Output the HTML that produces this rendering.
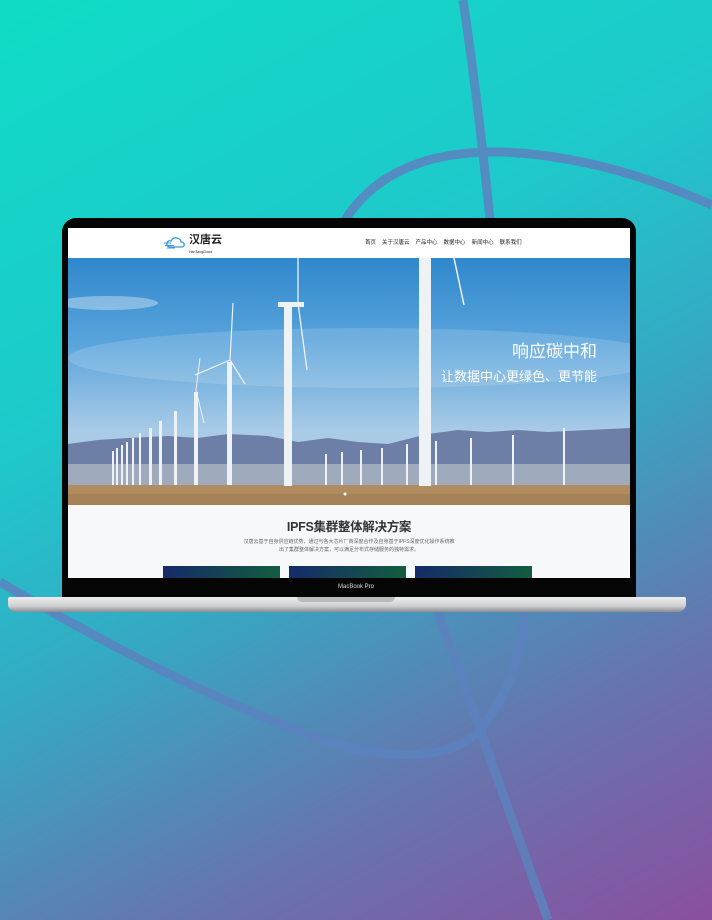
<!DOCTYPE html>
<html><head><meta charset="utf-8"><style>
body{margin:0;width:712px;height:920px;overflow:hidden;position:relative;font-family:"Liberation Sans","Noto Sans CJK SC",sans-serif;
background:linear-gradient(152deg,#0fdcc6 0%,#1ec9cb 35%,#35a9c4 55%,#6675ae 78%,#8a4f9f 100%);}
svg.bg{position:absolute;left:0;top:0}
.bezel{position:absolute;left:62px;top:218px;width:574px;height:381px;background:#050505;border-radius:14px 14px 0 0}
.screen{position:absolute;left:68px;top:228px;width:562px;height:350px;background:#f6f8fa;overflow:hidden}
.nav{height:30px;background:#fff;position:relative}
.logo{position:absolute;top:6px;font-size:11px;font-weight:bold;color:#222;line-height:12px}
.logo small{display:block;font-size:3.5px;font-weight:normal}
.menu{position:absolute;left:297px;top:10px;font-size:5.5px;color:#222}
.menu span{margin-right:6px}
.hero{position:absolute;top:30px;left:0;width:562px;height:247px;overflow:hidden}
.h1{position:absolute;right:33px;top:82px;color:#fff;font-size:17px;text-align:right;line-height:24px}
.sec h2{margin:0;position:absolute;top:288px;width:100%;text-align:center;font-size:12.5px;color:#333;letter-spacing:-0.3px}
.p{position:absolute;top:310px;width:100%;text-align:center;font-size:5px;color:#666;line-height:8px}
.card{position:absolute;top:338px;width:117px;height:14px;background:linear-gradient(110deg,#152a6a,#145e3e)}
.base{position:absolute;left:8px;top:597px;width:678px;height:15px;background:linear-gradient(#eee,#cfd0d2 60%,#8a8c90);border-radius:2px 2px 8px 8px}
.notch{position:absolute;left:297px;top:597px;width:98px;height:5px;background:#b9babd;border-radius:0 0 6px 6px}
.mb{position:absolute;top:584px;left:0;width:712px;text-align:center;color:#ddd;font-size:6px}
</style></head><body>
<svg class="bg" width="712" height="920">
<g fill="none" stroke="#5c82bf" stroke-width="9" opacity=".85">
<path d="M463 0 Q478 100 490 220"/>
<path d="M345 220 Q390 150 500 152 Q600 155 712 205"/>
<path d="M0 582 Q200 700 340 745 Q440 770 480 730 Q520 680 525 612"/>
<path d="M438 612 L548 920"/>
</g></svg>
<div class="bezel"></div>
<div class="screen">
<div class="nav">
<svg style="position:absolute;left:96px;top:7px" width="24" height="15"><path d="M7 12 Q2 12 3 8 Q4 5 7 6 Q9 2 13 3 Q17 4 17 7 Q21 7 20 11 Q19 12 17 12 Z" fill="none" stroke="#3a9be0" stroke-width="1.3"/><path d="M0 8h7M1 10.5h9M3 13h8" stroke="#3a9be0" stroke-width="1"/></svg>
<div class="logo" style="left:121px">汉唐云<small>HanTangCloud</small></div>
<div class="menu"><span>首页</span><span>关于汉唐云</span><span>产品中心</span><span>数据中心</span><span>新闻中心</span><span>联系我们</span></div>
</div>
<div class="hero">
<svg width="562" height="247">
<defs><linearGradient id="s" x1="0" y1="0" x2="0" y2="1"><stop offset="0" stop-color="#2f88cc"/><stop offset=".35" stop-color="#5aa4dc"/><stop offset=".7" stop-color="#a9cbe6"/></linearGradient></defs>
<rect width="562" height="247" fill="url(#s)"/>
<ellipse cx="40" cy="45" rx="50" ry="7" fill="#fff" opacity=".35"/>
<ellipse cx="300" cy="100" rx="300" ry="30" fill="#fff" opacity=".15"/>
<path d="M0 186 L30 182 60 180 100 178 130 180 160 176 200 178 230 184 260 180 290 184 320 186 360 176 390 172 420 174 450 172 480 174 520 172 562 170 V212 H0Z" fill="#6d7fa6"/>
<rect y="206" width="562" height="22" fill="#9fabbd"/>
<rect y="227" width="562" height="20" fill="#b08c60"/>
<rect y="236" width="562" height="11" fill="#9c7a50" opacity=".6"/>
<g fill="#eef2f5" stroke="#eef2f5">
<rect x="351" y="0" width="12" height="228" stroke="none"/>
<path d="M386 0 L396 47" stroke-width="1.5"/>
<rect x="216" y="47" width="8" height="181" stroke="none"/>
<rect x="210" y="44" width="26" height="5" stroke="none"/>
<path d="M230 45 L230 0 M230 45 L239 112" stroke-width="1.3"/>
<rect x="159" y="104" width="5" height="123" stroke="none"/>
<path d="M162 102 L165 45 M162 102 L177 126 M162 102 L127 117" stroke-width="1.2"/>
<rect x="126" y="134" width="4" height="93" stroke="none"/>
<path d="M128 132 L132 100 M128 132 L136 165" stroke-width="1"/>
<rect x="106" y="153" width="3" height="74" stroke="none"/>
<rect x="91" y="163" width="3" height="64" stroke="none"/>
<rect x="81" y="170" width="3" height="57" stroke="none"/>
<rect x="71" y="175" width="2" height="52" stroke="none"/>
<rect x="64" y="180" width="2" height="47" stroke="none"/>
<rect x="58" y="184" width="2" height="43" stroke="none"/>
<rect x="53" y="187" width="2" height="40" stroke="none"/>
<rect x="48" y="190" width="2" height="37" stroke="none"/>
<rect x="44" y="193" width="2" height="34" stroke="none"/>
<rect x="495" y="170" width="2" height="57" stroke="none"/>
<rect x="444" y="177" width="2" height="50" stroke="none"/>
<rect x="402" y="180" width="2" height="47" stroke="none"/>
<rect x="367" y="183" width="2" height="44" stroke="none"/>
<rect x="338" y="186" width="2" height="41" stroke="none"/>
<rect x="313" y="190" width="2" height="37" stroke="none"/>
<rect x="292" y="192" width="2" height="35" stroke="none"/>
<rect x="273" y="194" width="2" height="33" stroke="none"/>
<rect x="257" y="196" width="2" height="31" stroke="none"/>
</g>
<circle cx="277" cy="236" r="1.5" fill="#fff"/>
</svg>
<div class="h1">响应碳中和<br><span style="font-size:13px">让数据中心更绿色、更节能</span></div>
</div>
<div class="sec"><h2>IPFS集群整体解决方案</h2>
<div class="p">汉唐云基于自身供应链优势，通过与各大芯片厂商深度合作及自身基于IPFS深度优化操作系统推<br>出了集群整体解决方案，可以满足分布式存储服务的独特需求。</div>
<div class="card" style="left:95px"></div><div class="card" style="left:221px"></div><div class="card" style="left:347px"></div>
</div>
</div>
<div class="mb">MacBook Pro</div>
<div class="base"></div><div class="notch"></div>
</body></html>
